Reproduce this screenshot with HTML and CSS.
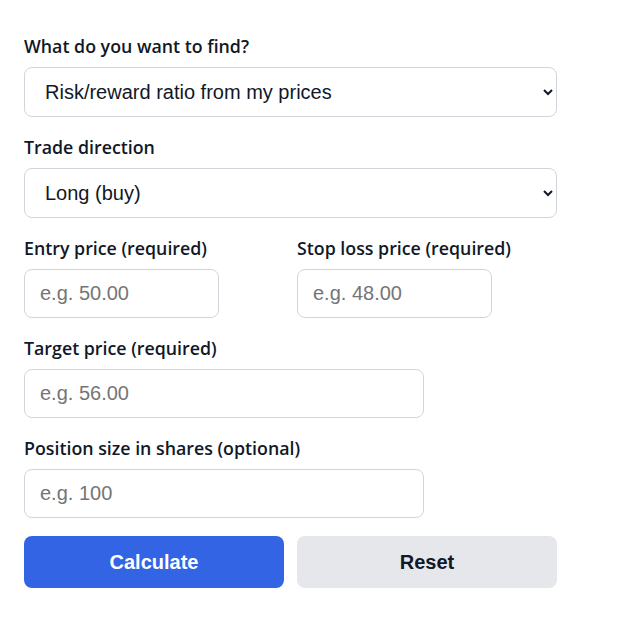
FILE: index.html
```html
<!DOCTYPE html>
<html lang="en">
<head>
<meta charset="utf-8">
<title>Risk/reward calculator</title>
<link rel="stylesheet" href="styles.css">
</head>
<body>
<form class="calc">
  <div class="field">
    <label class="label" for="mode">What do you want to find?</label>
    <select id="mode" class="control select">
      <option>Risk/reward ratio from my prices</option>
    </select>
  </div>
  <div class="field">
    <label class="label" for="dir">Trade direction</label>
    <select id="dir" class="control select">
      <option>Long (buy)</option>
    </select>
  </div>
  <div class="row">
    <div class="field">
      <label class="label" for="entry">Entry price (required)</label>
      <input id="entry" class="control input" type="text" placeholder="e.g. 50.00">
    </div>
    <div class="field">
      <label class="label" for="stop">Stop loss price (required)</label>
      <input id="stop" class="control input" type="text" placeholder="e.g. 48.00">
    </div>
  </div>
  <div class="field">
    <label class="label" for="target">Target price (required)</label>
    <input id="target" class="control input" type="text" placeholder="e.g. 56.00">
  </div>
  <div class="field">
    <label class="label" for="size">Position size in shares (optional)</label>
    <input id="size" class="control input" type="text" placeholder="e.g. 100">
  </div>
  <div class="actions">
    <button type="button" class="btn btn-primary">Calculate</button>
    <button type="button" class="btn btn-secondary">Reset</button>
  </div>
</form>
</body>
</html>
```
FILE: styles.css
```css
html, body {
  margin: 0;
  padding: 0;
  background: #ffffff;
}

body {
  font-family: "Liberation Sans", Arial, sans-serif;
  color: #111827;
}

.calc {
  width: 533px;
  margin: 34px 0 0 24px;
}

.field {
  margin-bottom: 18px;
}

.label {
  display: block;
  font-family: "Open Sans", "Noto Sans", sans-serif;
  font-weight: 600;
  font-size: 17.8px;
  line-height: 25px;
  margin-bottom: 8px;
  color: #111827;
}

.control {
  box-sizing: border-box;
  height: 49px;
  border: 1px solid #d1d5db;
  border-radius: 8px;
  background: #ffffff;
  font-family: "Liberation Sans", Arial, sans-serif;
  font-size: 20px;
  color: #111827;
  padding: 0 15px;
  outline: none;
}

.select {
  width: 100%;
  height: 50px;
  padding-left: 16px;
  padding-right: 8px;
}

.input {
  width: 75%;
  display: block;
}

.input::placeholder {
  color: #757575;
}

.row {
  display: grid;
  grid-template-columns: 1fr 1fr;
  column-gap: 13px;
}

.actions {
  display: grid;
  grid-template-columns: 1fr 1fr;
  column-gap: 13px;
}

.btn {
  height: 52px;
  border: none;
  border-radius: 8px;
  font-family: "Liberation Sans", Arial, sans-serif;
  font-weight: 700;
  font-size: 20px;
  cursor: pointer;
}

.btn-primary {
  background: #3264e4;
  color: #ffffff;
}

.btn-secondary {
  background: #e5e7eb;
  color: #111827;
}
```
